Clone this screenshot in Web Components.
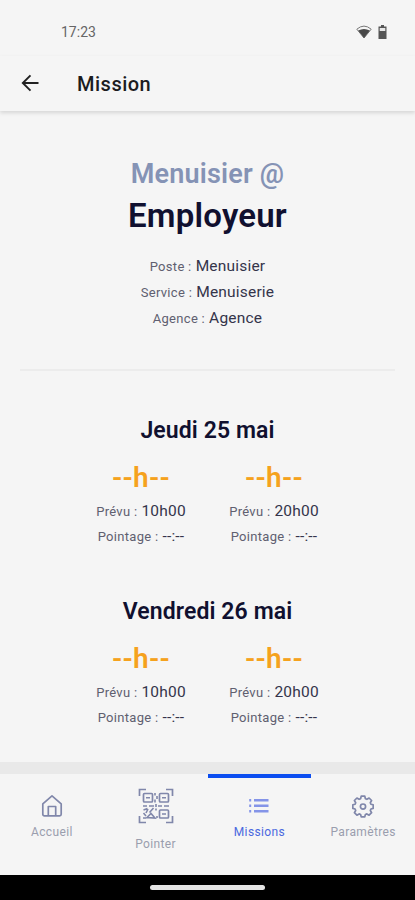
<!DOCTYPE html>
<html lang="fr">
<head>
<meta charset="utf-8">
<meta name="viewport" content="width=device-width, initial-scale=1">
<title>Mission</title>
<style>
  body {
    margin: 0;
    background: #f5f5f5;
    font-family: Roboto, "Liberation Sans", sans-serif;
  }
</style>
</head>
<body>
<mission-app></mission-app>

<script>
/**
 * Creates a template from a html string.
 *
 * @param {string} html - The markup and styles.
 * @returns {HTMLTemplateElement} The template.
 */
function createTemplate (html) {
  const template = document.createElement('template')
  template.innerHTML = html
  return template
}

/**
 * Base class, attaches an open shadow root with a copy of the template.
 */
class BaseElement extends HTMLElement {
  /**
   * Creates an instance of the element.
   */
  constructor () {
    super()
    this.attachShadow({ mode: 'open' })
    this.shadowRoot.appendChild(this.constructor.template.content.cloneNode(true))
  }
}

customElements.define('status-bar',
  /**
   * The clock and the system icons.
   */
  class extends BaseElement {
    static template = createTemplate(`
<style>
    :host {
        display: flex;
        justify-content: space-between;
        align-items: center;
        box-sizing: border-box;
        height: 56px;
        padding: 8px 28px 0 61px;
        font-size: 14px;
        color: #666;
    }
    .icons {
        display: flex;
        align-items: center;
        gap: 6px;
    }
    svg {
        display: block;
    }
</style>
<span>17:23</span>
<div class="icons">
    <svg width="16" height="14" viewBox="0 0 16 14">
        <path d="M.8 4.2Q8-2 15.200 4.200L8 13z" fill="#f5f5f5" stroke="#777" stroke-width="1"/>
        <path d="M2.200 5.600Q8 2.300 13.800 5.600L8 13z" fill="#484848"/>
    </svg>
    <svg width="9" height="14" viewBox="0 0 9 14">
        <path d="M3 0h3v1.500h2.500V14H.5V1.500H3z" fill="#555"/>
        <path d="M1.700 3h5.600v3H1.700z" fill="#e8e8e8"/>
    </svg>
</div>
`)
  })

customElements.define('app-header',
  /**
   * The header with the back arrow and the title.
   */
  class extends BaseElement {
    static template = createTemplate(`
<style>
    :host {
        display: flex;
        align-items: center;
        box-sizing: border-box;
        height: 55px;
        padding: 0 20px;
        box-shadow: 0 2px 4px rgba(0, 0, 0, .13);
    }
    svg {
        margin: 0 37px 1px 0;
    }
    h1 {
        margin: 0;
        font-size: 20px;
        font-weight: 500;
        letter-spacing: .5px;
        color: #1c1c1e;
    }
</style>
<svg width="20" height="20" viewBox="0 0 20 20" fill="none" stroke="#222" stroke-width="1.900">
    <path d="M18.500 10H3M10.500 2.300L2.800 10l7.700 7.700"/>
</svg>
<h1><slot></slot></h1>
`)
  })

customElements.define('label-row',
  /**
   * A small label followed by its value.
   */
  class extends BaseElement {
    static template = createTemplate(`
<style>
    :host {
        display: block;
        height: 26px;
        line-height: 26px;
        white-space: nowrap;
        font-size: 15.500px;
        letter-spacing: .2px;
        color: #34344a;
    }
    .label {
        font-size: 13px;
        letter-spacing: .3px;
        color: #606070;
    }
</style>
<span class="label"></span> <slot></slot>
`)

    /**
     * Called when the element is inserted into the DOM.
     */
    connectedCallback () {
      this.shadowRoot.querySelector('.label').textContent = `${this.getAttribute('label')} :`
    }
  })

customElements.define('mission-summary',
  /**
   * The job, the employer and the details of the mission.
   */
  class extends BaseElement {
    static template = createTemplate(`
<style>
    :host {
        display: block;
        box-sizing: border-box;
        height: 260px;
        margin: 0 20px;
        padding-top: 43px;
        border-bottom: 2px solid #ececec;
        text-align: center;
    }
    .job, .employer {
        font-weight: 600;
    }
    .job {
        height: 41px;
        line-height: 41px;
        font-size: 27px;
        letter-spacing: .2px;
        color: #8593b5;
    }
    .employer {
        height: 41px;
        line-height: 41px;
        margin-bottom: 17px;
        font-size: 33px;
        letter-spacing: .2px;
        color: #10102f;
    }
</style>
<div class="job"><slot name="job"></slot></div>
<div class="employer"><slot name="employer"></slot></div>
<slot></slot>
`)
  })

customElements.define('time-slot',
  /**
   * A clocked time with the planned and the registered time.
   */
  class extends BaseElement {
    static template = createTemplate(`
<style>
    :host {
        display: block;
        width: 133px;
        text-align: center;
    }
    .time {
        height: 34px;
        line-height: 34px;
        margin-bottom: 3px;
        font-size: 28px;
        font-weight: 600;
        letter-spacing: .3px;
        color: #f5a21d;
    }
    label-row {
        height: 25px;
    }
</style>
<div class="time">--h--</div>
<label-row label="Prévu"><slot></slot></label-row>
<label-row label="Pointage">--:--</label-row>
`)
  })

customElements.define('mission-day',
  /**
   * A day of the mission with its start and end.
   */
  class extends BaseElement {
    static template = createTemplate(`
<style>
    :host {
        display: block;
        height: 180.500px;
    }
    h2 {
        height: 30px;
        line-height: 30px;
        margin: 0 0 15px;
        font-size: 23px;
        font-weight: 600;
        letter-spacing: .1px;
        text-align: center;
        color: #10102f;
    }
    .times {
        display: flex;
        justify-content: center;
    }
</style>
<h2><slot name="date"></slot></h2>
<div class="times"><slot></slot></div>
`)
  })

customElements.define('tab-item',
  /**
   * A tab with an icon and a label.
   */
  class extends BaseElement {
    static template = createTemplate(`
<style>
    :host {
        display: flex;
        flex: 1;
        flex-direction: column;
        align-items: center;
        box-sizing: border-box;
        padding-top: 16px;
        border-top: 4px solid transparent;
        font-size: 12px;
        letter-spacing: .35px;
        line-height: 16px;
        color: #9a9eae;
    }
    :host([active]) {
        border-top-color: #0b4df0;
        color: #4a68df;
    }
    ::slotted(svg) {
        display: block;
        margin-bottom: 6px;
    }
    :host([large]) {
        padding-top: 10px;
    }
    :host([large]) ::slotted(svg) {
        margin-bottom: 12px;
    }
</style>
<slot name="icon"></slot>
<span><slot></slot></span>
`)
  })

customElements.define('tab-bar',
  /**
   * The bottom navigation.
   */
  class extends BaseElement {
    static template = createTemplate(`
<style>
    :host {
        display: flex;
        box-sizing: border-box;
        height: 113px;
        border-top: 12px solid #e9e9e9;
        background: #f5f5f5;
    }
</style>
<slot></slot>
`)
  })

customElements.define('home-indicator',
  /**
   * The system gesture bar.
   */
  class extends BaseElement {
    static template = createTemplate(`
<style>
    :host {
        display: flex;
        justify-content: center;
        align-items: center;
        height: 25px;
        background: #000;
    }
    div {
        width: 115px;
        height: 5px;
        border-radius: 3px;
        background: #e4e4e4;
    }
</style>
<div></div>
`)
  })

customElements.define('mission-app',
  /**
   * Represents the mission page.
   */
  class extends BaseElement {
    static template = createTemplate(`
<style>
    :host {
        display: flex;
        flex-direction: column;
        height: 900px;
        overflow: hidden;
    }
    main {
        flex: 1;
        min-height: 0;
    }
    .days {
        padding-top: 45px;
    }
</style>
<status-bar></status-bar>
<app-header>Mission</app-header>
<main>
    <mission-summary>
        <span slot="job">Menuisier @</span>
        <span slot="employer">Employeur</span>
        <label-row label="Poste">Menuisier</label-row>
        <label-row label="Service">Menuiserie</label-row>
        <label-row label="Agence">Agence</label-row>
    </mission-summary>
    <div class="days">
        <mission-day>
            <span slot="date">Jeudi 25 mai</span>
            <time-slot>10h00</time-slot>
            <time-slot>20h00</time-slot>
        </mission-day>
        <mission-day>
            <span slot="date">Vendredi 26 mai</span>
            <time-slot>10h00</time-slot>
            <time-slot>20h00</time-slot>
        </mission-day>
    </div>
</main>
<tab-bar>
    <tab-item>
        <svg slot="icon" width="22" height="24" viewBox="0 0 22 24" fill="none" stroke="#8087aa" stroke-width="1.700" stroke-linejoin="round">
            <path d="M1.800 9.800L11 1.800l9.200 8v10.400a1.600 1.600 0 0 1-1.600 1.600H3.400a1.600 1.600 0 0 1-1.600-1.600z"/>
            <path d="M7.300 21.800v-9.300h7.400v9.300"/>
        </svg>
        Accueil
    </tab-item>
    <tab-item large>
        <svg slot="icon" width="36" height="36" viewBox="0 0 36 36" fill="none" stroke="#8087aa" stroke-width="1.700">
            <path d="M1.500 8V1.500H8M28 1.500h6.500V8M34.500 28v6.500H28M8 34.500H1.500V28"/>
            <rect x="5.500" y="5.500" width="9" height="8.500" rx="1"/>
            <rect x="21.500" y="5.500" width="9" height="8.500" rx="1"/>
            <rect x="21.500" y="22" width="9" height="8" rx="1"/>
            <path d="M8 9.800h4M24 9.800h4M24 26h4M17 5v2.500M19 8v3M17 11.500v3M5 18h4M11 18h5M18 16v3M20 18h4M26 18h5M5.500 22l4-1.500M10 21l-2 4M15.500 20l-4 4.500M18 20.500v2M5.500 25l2.500 3M9 29.500l4-4 4 4.500zM5 30h3M19 30v-2" stroke-width="1.600"/>
        </svg>
        Pointer
    </tab-item>
    <tab-item active>
        <svg slot="icon" width="22" height="24" viewBox="0 0 22 24" stroke="#8494e8" stroke-width="2.500">
            <path d="M1.200 6.300h2M6 6.300h14.500M1.200 11.800h2M6 11.800h14.500M1.200 17.200h2M6 17.200h14.500"/>
        </svg>
        Missions
    </tab-item>
    <tab-item>
        <svg slot="icon" width="22" height="24" viewBox="0 0 22 24" fill="none" stroke="#8087aa" stroke-width="1.700" stroke-linejoin="round">
            <path d="M9.200 2.200h3.600l.6 2.500 1.500.6 2.200-1.300 2.500 2.500-1.300 2.200.6 1.500 2.300.6v3.600l-2.300.6-.6 1.500 1.300 2.200-2.500 2.500-2.200-1.300-1.500.6-.6 2.300H9.200l-.6-2.300-1.500-.6-2.200 1.300-2.500-2.500 1.300-2.200-.6-1.500-2.300-.6v-3.600l2.300-.6.6-1.500-1.300-2.200L4.900 4l2.200 1.300 1.500-.6z"/>
            <circle cx="11" cy="12.600" r="2.600"/>
        </svg>
        Paramètres
    </tab-item>
</tab-bar>
<home-indicator></home-indicator>
`)
  })
</script>
</body>
</html>
